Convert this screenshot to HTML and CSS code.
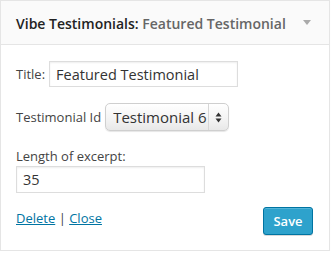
FILE: index.html
```html
<!DOCTYPE html>
<html lang="en">
<head>
  <meta charset="UTF-8" />
  <title>Vibe Testimonials Widget</title>
  <link rel="stylesheet" href="styles.css">
</head>
<body>
  <div class="widget">
    <div class="widget-top">
      <h4 class="widget-title">Vibe Testimonials: <span class="in-widget-title">Featured Testimonial</span></h4>
      <span class="widget-toggle" aria-hidden="true"></span>
    </div>

    <form class="widget-inside">
      <p class="row">
        <label for="w-title">Title:</label>
        <input id="w-title" class="field" type="text" value="Featured Testimonial" />
      </p>

      <p class="row">
        <label for="w-id">Testimonial Id</label>
        <span class="select-wrap">
          <select id="w-id" class="select">
            <option>Testimonial 6</option>
          </select>
          <span class="select-arrows" aria-hidden="true">
            <svg width="7" height="11" viewBox="0 0 7 11">
              <path d="M3.5 0.5 L6.5 4.5 L0.5 4.5 Z" fill="#333" />
              <path d="M3.5 10.5 L6.5 6.5 L0.5 6.5 Z" fill="#333" />
            </svg>
          </span>
        </span>
      </p>

      <p class="stack">
        <label for="w-len">Length of excerpt:</label>
        <input id="w-len" class="field" type="text" value="35" />
      </p>

      <div class="widget-control">
        <div class="control-links">
          <a href="#">Delete</a> | <a href="#">Close</a>
        </div>
        <button type="button" class="btn-save">Save</button>
      </div>
    </form>
  </div>
</body>
</html>
```

FILE: styles.css
```css
* {
  margin: 0;
  padding: 0;
  box-sizing: border-box;
}

body {
  font-family: 'Open Sans', sans-serif;
  font-size: 13px;
  color: #444;
  background: #fff;
}

.widget {
  width: 330px;
  border: 1px solid #e5e5e5;
  background: #fff;
  box-shadow: 0 1px 1px rgba(0, 0, 0, 0.04);
}

.widget-top {
  height: 44px;
  padding: 0 15px;
  background: #fafafa;
  border-bottom: 1px solid #e5e5e5;
  display: flex;
  justify-content: space-between;
  align-items: center;
}

.widget-title {
  font-size: 14px;
  font-weight: 600;
  color: #222;
  padding-top: 1px;
}

.in-widget-title {
  color: #666;
}

.widget-toggle {
  width: 0;
  height: 0;
  border-left: 4px solid transparent;
  border-right: 4px solid transparent;
  border-top: 5px solid #aaa;
  margin-right: 3px;
}

.widget-inside {
  padding: 16px 15px 15px;
  display: flex;
  flex-direction: column;
  gap: 16px;
}

.row {
  display: flex;
  align-items: center;
  gap: 4px;
}

.stack {
  display: flex;
  flex-direction: column;
  gap: 1px;
  line-height: 18px;
}

.field {
  width: 189px;
  height: 27px;
  padding: 0 6px;
  border: 1px solid #ddd;
  font-family: 'Open Sans', sans-serif;
  font-size: 14.5px;
  color: #333;
  box-shadow: inset 0 1px 2px rgba(0, 0, 0, 0.07);
}

.row .field {
  height: 26px;
}

.select-wrap {
  position: relative;
  display: inline-block;
}

.select {
  appearance: none;
  -webkit-appearance: none;
  width: 124px;
  height: 28px;
  padding: 0 20px 0 7px;
  border: 1px solid #cfcfcf;
  border-radius: 5px;
  background: linear-gradient(#fff, #f3f3f3 60%, #e8e8e8);
  box-shadow: 0 1px 1px rgba(0, 0, 0, 0.1);
  font-family: 'Open Sans', sans-serif;
  font-size: 15px;
  color: #333;
}

.select-arrows {
  position: absolute;
  top: 1px;
  right: 1px;
  width: 20px;
  height: 26px;
  border-left: 1px solid #d6d6d6;
  display: flex;
  align-items: center;
  justify-content: center;
  pointer-events: none;
}

.widget-control {
  display: flex;
  justify-content: space-between;
  align-items: center;
  margin-top: -2px;
}

.control-links {
  color: #444;
  margin-top: -7px;
}

.control-links a {
  color: #0074a2;
}

.btn-save {
  width: 50px;
  height: 28px;
  background: #2ea2cc;
  border: 1px solid #0074a2;
  border-radius: 3px;
  box-shadow: inset 0 1px 0 rgba(120, 200, 230, 0.5), 0 1px 0 rgba(0, 0, 0, 0.15);
  color: #fff;
  font-family: 'Open Sans', sans-serif;
  font-size: 13px;
  font-weight: 600;
  margin-right: 1px;
}
```
